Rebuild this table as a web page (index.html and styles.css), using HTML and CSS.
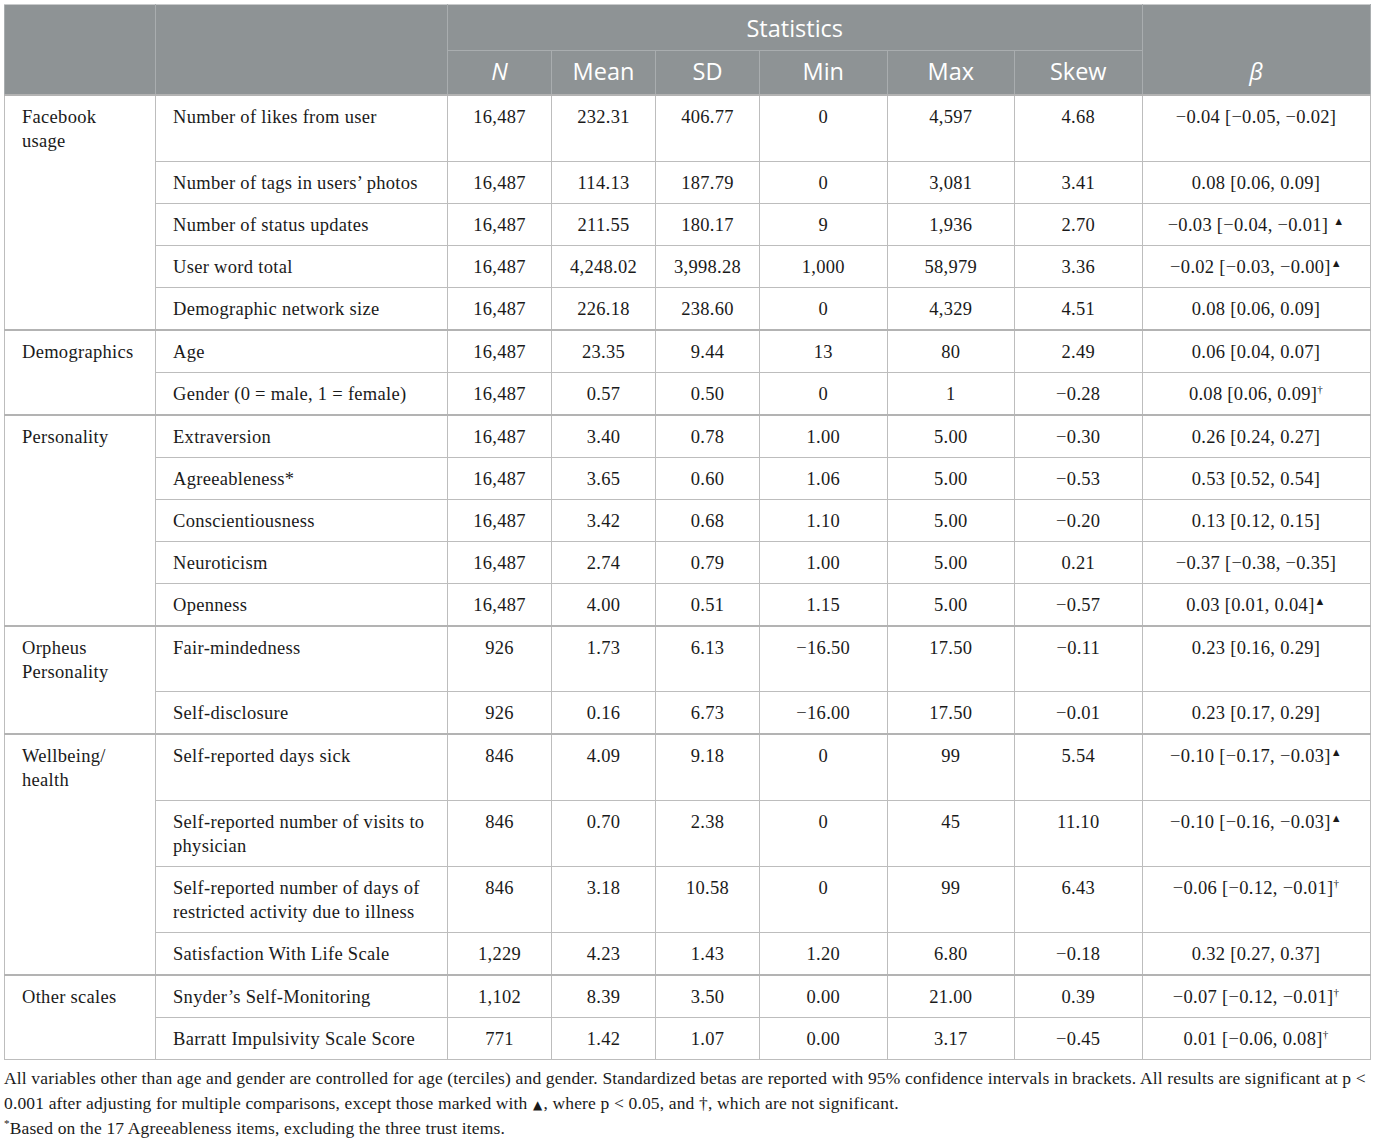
FILE: index.html
```html
<!DOCTYPE html>
<html>
<head>
<meta charset="utf-8">
<link rel="stylesheet" href="styles.css">
</head>
<body>
<div class="page">
<table class="stats">
  <colgroup>
    <col class="c1"><col class="c2"><col class="c3"><col class="c3"><col class="c3"><col class="c4"><col class="c4"><col class="c4"><col class="c5">
  </colgroup>
  <thead>
    <tr class="h1">
      <th rowspan="2"></th>
      <th rowspan="2"></th>
      <th colspan="6">Statistics</th>
      <th rowspan="2" class="hb"><i>β</i></th>
    </tr>
    <tr class="h2">
      <th><i>N</i></th>
      <th>Mean</th>
      <th>SD</th>
      <th>Min</th>
      <th>Max</th>
      <th>Skew</th>
    </tr>
  </thead>
  <tbody>
    <tr class="first"><td class="g">Facebook<br>usage</td><td class="v">Number of likes from user</td><td>16,487</td><td>232.31</td><td>406.77</td><td>0</td><td>4,597</td><td>4.68</td><td>−0.04 [−0.05, −0.02]</td></tr>
    <tr><td class="g cont"></td><td class="v">Number of tags in users’ photos</td><td>16,487</td><td>114.13</td><td>187.79</td><td>0</td><td>3,081</td><td>3.41</td><td>0.08 [0.06, 0.09]</td></tr>
    <tr><td class="g cont"></td><td class="v">Number of status updates</td><td>16,487</td><td>211.55</td><td>180.17</td><td>9</td><td>1,936</td><td>2.70</td><td>−0.03 [−0.04, −0.01] <span class="tri">▲</span></td></tr>
    <tr><td class="g cont"></td><td class="v">User word total</td><td>16,487</td><td>4,248.02</td><td>3,998.28</td><td>1,000</td><td>58,979</td><td>3.36</td><td>−0.02 [−0.03, −0.00]<span class="tri">▲</span></td></tr>
    <tr><td class="g cont"></td><td class="v">Demographic network size</td><td>16,487</td><td>226.18</td><td>238.60</td><td>0</td><td>4,329</td><td>4.51</td><td>0.08 [0.06, 0.09]</td></tr>

    <tr class="first"><td class="g">Demographics</td><td class="v">Age</td><td>16,487</td><td>23.35</td><td>9.44</td><td>13</td><td>80</td><td>2.49</td><td>0.06 [0.04, 0.07]</td></tr>
    <tr><td class="g cont"></td><td class="v">Gender (0 = male, 1 = female)</td><td>16,487</td><td>0.57</td><td>0.50</td><td>0</td><td>1</td><td>−0.28</td><td>0.08 [0.06, 0.09]<sup>†</sup></td></tr>

    <tr class="first"><td class="g">Personality</td><td class="v">Extraversion</td><td>16,487</td><td>3.40</td><td>0.78</td><td>1.00</td><td>5.00</td><td>−0.30</td><td>0.26 [0.24, 0.27]</td></tr>
    <tr><td class="g cont"></td><td class="v">Agreeableness*</td><td>16,487</td><td>3.65</td><td>0.60</td><td>1.06</td><td>5.00</td><td>−0.53</td><td>0.53 [0.52, 0.54]</td></tr>
    <tr><td class="g cont"></td><td class="v">Conscientiousness</td><td>16,487</td><td>3.42</td><td>0.68</td><td>1.10</td><td>5.00</td><td>−0.20</td><td>0.13 [0.12, 0.15]</td></tr>
    <tr><td class="g cont"></td><td class="v">Neuroticism</td><td>16,487</td><td>2.74</td><td>0.79</td><td>1.00</td><td>5.00</td><td>0.21</td><td>−0.37 [−0.38, −0.35]</td></tr>
    <tr><td class="g cont"></td><td class="v">Openness</td><td>16,487</td><td>4.00</td><td>0.51</td><td>1.15</td><td>5.00</td><td>−0.57</td><td>0.03 [0.01, 0.04]<span class="tri">▲</span></td></tr>

    <tr class="first"><td class="g">Orpheus<br>Personality</td><td class="v">Fair-mindedness</td><td>926</td><td>1.73</td><td>6.13</td><td>−16.50</td><td>17.50</td><td>−0.11</td><td>0.23 [0.16, 0.29]</td></tr>
    <tr><td class="g cont"></td><td class="v">Self-disclosure</td><td>926</td><td>0.16</td><td>6.73</td><td>−16.00</td><td>17.50</td><td>−0.01</td><td>0.23 [0.17, 0.29]</td></tr>

    <tr class="first"><td class="g">Wellbeing/<br>health</td><td class="v">Self-reported days sick</td><td>846</td><td>4.09</td><td>9.18</td><td>0</td><td>99</td><td>5.54</td><td>−0.10 [−0.17, −0.03]<span class="tri">▲</span></td></tr>
    <tr><td class="g cont"></td><td class="v">Self-reported number of visits to<br>physician</td><td>846</td><td>0.70</td><td>2.38</td><td>0</td><td>45</td><td>11.10</td><td>−0.10 [−0.16, −0.03]<span class="tri">▲</span></td></tr>
    <tr><td class="g cont"></td><td class="v">Self-reported number of days of<br>restricted activity due to illness</td><td>846</td><td>3.18</td><td>10.58</td><td>0</td><td>99</td><td>6.43</td><td>−0.06 [−0.12, −0.01]<sup>†</sup></td></tr>
    <tr><td class="g cont"></td><td class="v">Satisfaction With Life Scale</td><td>1,229</td><td>4.23</td><td>1.43</td><td>1.20</td><td>6.80</td><td>−0.18</td><td>0.32 [0.27, 0.37]</td></tr>

    <tr class="first"><td class="g">Other scales</td><td class="v">Snyder’s Self-Monitoring</td><td>1,102</td><td>8.39</td><td>3.50</td><td>0.00</td><td>21.00</td><td>0.39</td><td>−0.07 [−0.12, −0.01]<sup>†</sup></td></tr>
    <tr><td class="g cont"></td><td class="v">Barratt Impulsivity Scale Score</td><td>771</td><td>1.42</td><td>1.07</td><td>0.00</td><td>3.17</td><td>−0.45</td><td>0.01 [−0.06, 0.08]<sup>†</sup></td></tr>
  </tbody>
</table>
<div class="notes">
  <p>All variables other than age and gender are controlled for age (terciles) and gender. Standardized betas are reported with 95% confidence intervals in brackets. All results are significant at p &lt; 0.001 after adjusting for multiple comparisons, except those marked with <span class="tri-n">▲</span>, where p &lt; 0.05, and †, which are not significant.</p>
  <p><sup class="ast">*</sup>Based on the 17 Agreeableness items, excluding the three trust items.</p>
</div>
</div>
</body>
</html>
```

FILE: styles.css
```css
html, body {
  margin: 0;
  padding: 0;
  background: #ffffff;
}

.page {
  padding: 4px 5px 0 4px;
  font-family: "Liberation Serif", "Times New Roman", serif;
  color: #1a1a1a;
}

.stats {
  border-collapse: collapse;
  width: 1366px;
  table-layout: fixed;
}

.c1 { width: 151px; }
.c2 { width: 292px; }
.c3 { width: 104px; }
.c4 { width: 127.5px; }
.c5 { width: 228px; }

.stats th {
  background: #8e9395;
  color: #ffffff;
  font-family: "Open Sans", "Liberation Sans", sans-serif;
  font-weight: 400;
  font-size: 23.5px;
  line-height: 30px;
  border: 1px solid #a9adaf;
  padding: 0;
  text-align: center;
  vertical-align: middle;
}

.stats thead tr:first-child th {
  border-top: 1px solid #c9cbcc;
}

.h1 th { height: 45px; }
.h2 th { height: 39px; padding-bottom: 4px; }

.stats th.hb {
  vertical-align: bottom;
  padding-bottom: 8px;
}

.stats td {
  font-size: 18.5px;
  letter-spacing: 0.3px;
  line-height: 24px;
  border: 1px solid #bdbdbd;
  padding: 9px 4px 8px;
  text-align: center;
  vertical-align: top;
}

.stats td.g,
.stats td.v {
  text-align: left;
  padding-left: 17px;
}

.stats td.cont {
  border-top-style: hidden;
}

.stats tr.first td {
  border-top: 2px solid #b3b3b3;
}

.tri {
  font-size: 11px;
  line-height: 0;
  vertical-align: 6px;
}

.stats sup {
  font-size: 11px;
  line-height: 0;
}

.notes {
  font-size: 17.5px;
  letter-spacing: 0.15px;
  line-height: 25px;
  padding-top: 6px;
  width: 1366px;
}

.notes p {
  margin: 0;
}

.tri-n {
  font-family: "DejaVu Sans", sans-serif;
  font-size: 12px;
  line-height: 1;
  margin: 0 1px;
}

.ast {
  font-size: 11px;
  line-height: 0;
}
```
